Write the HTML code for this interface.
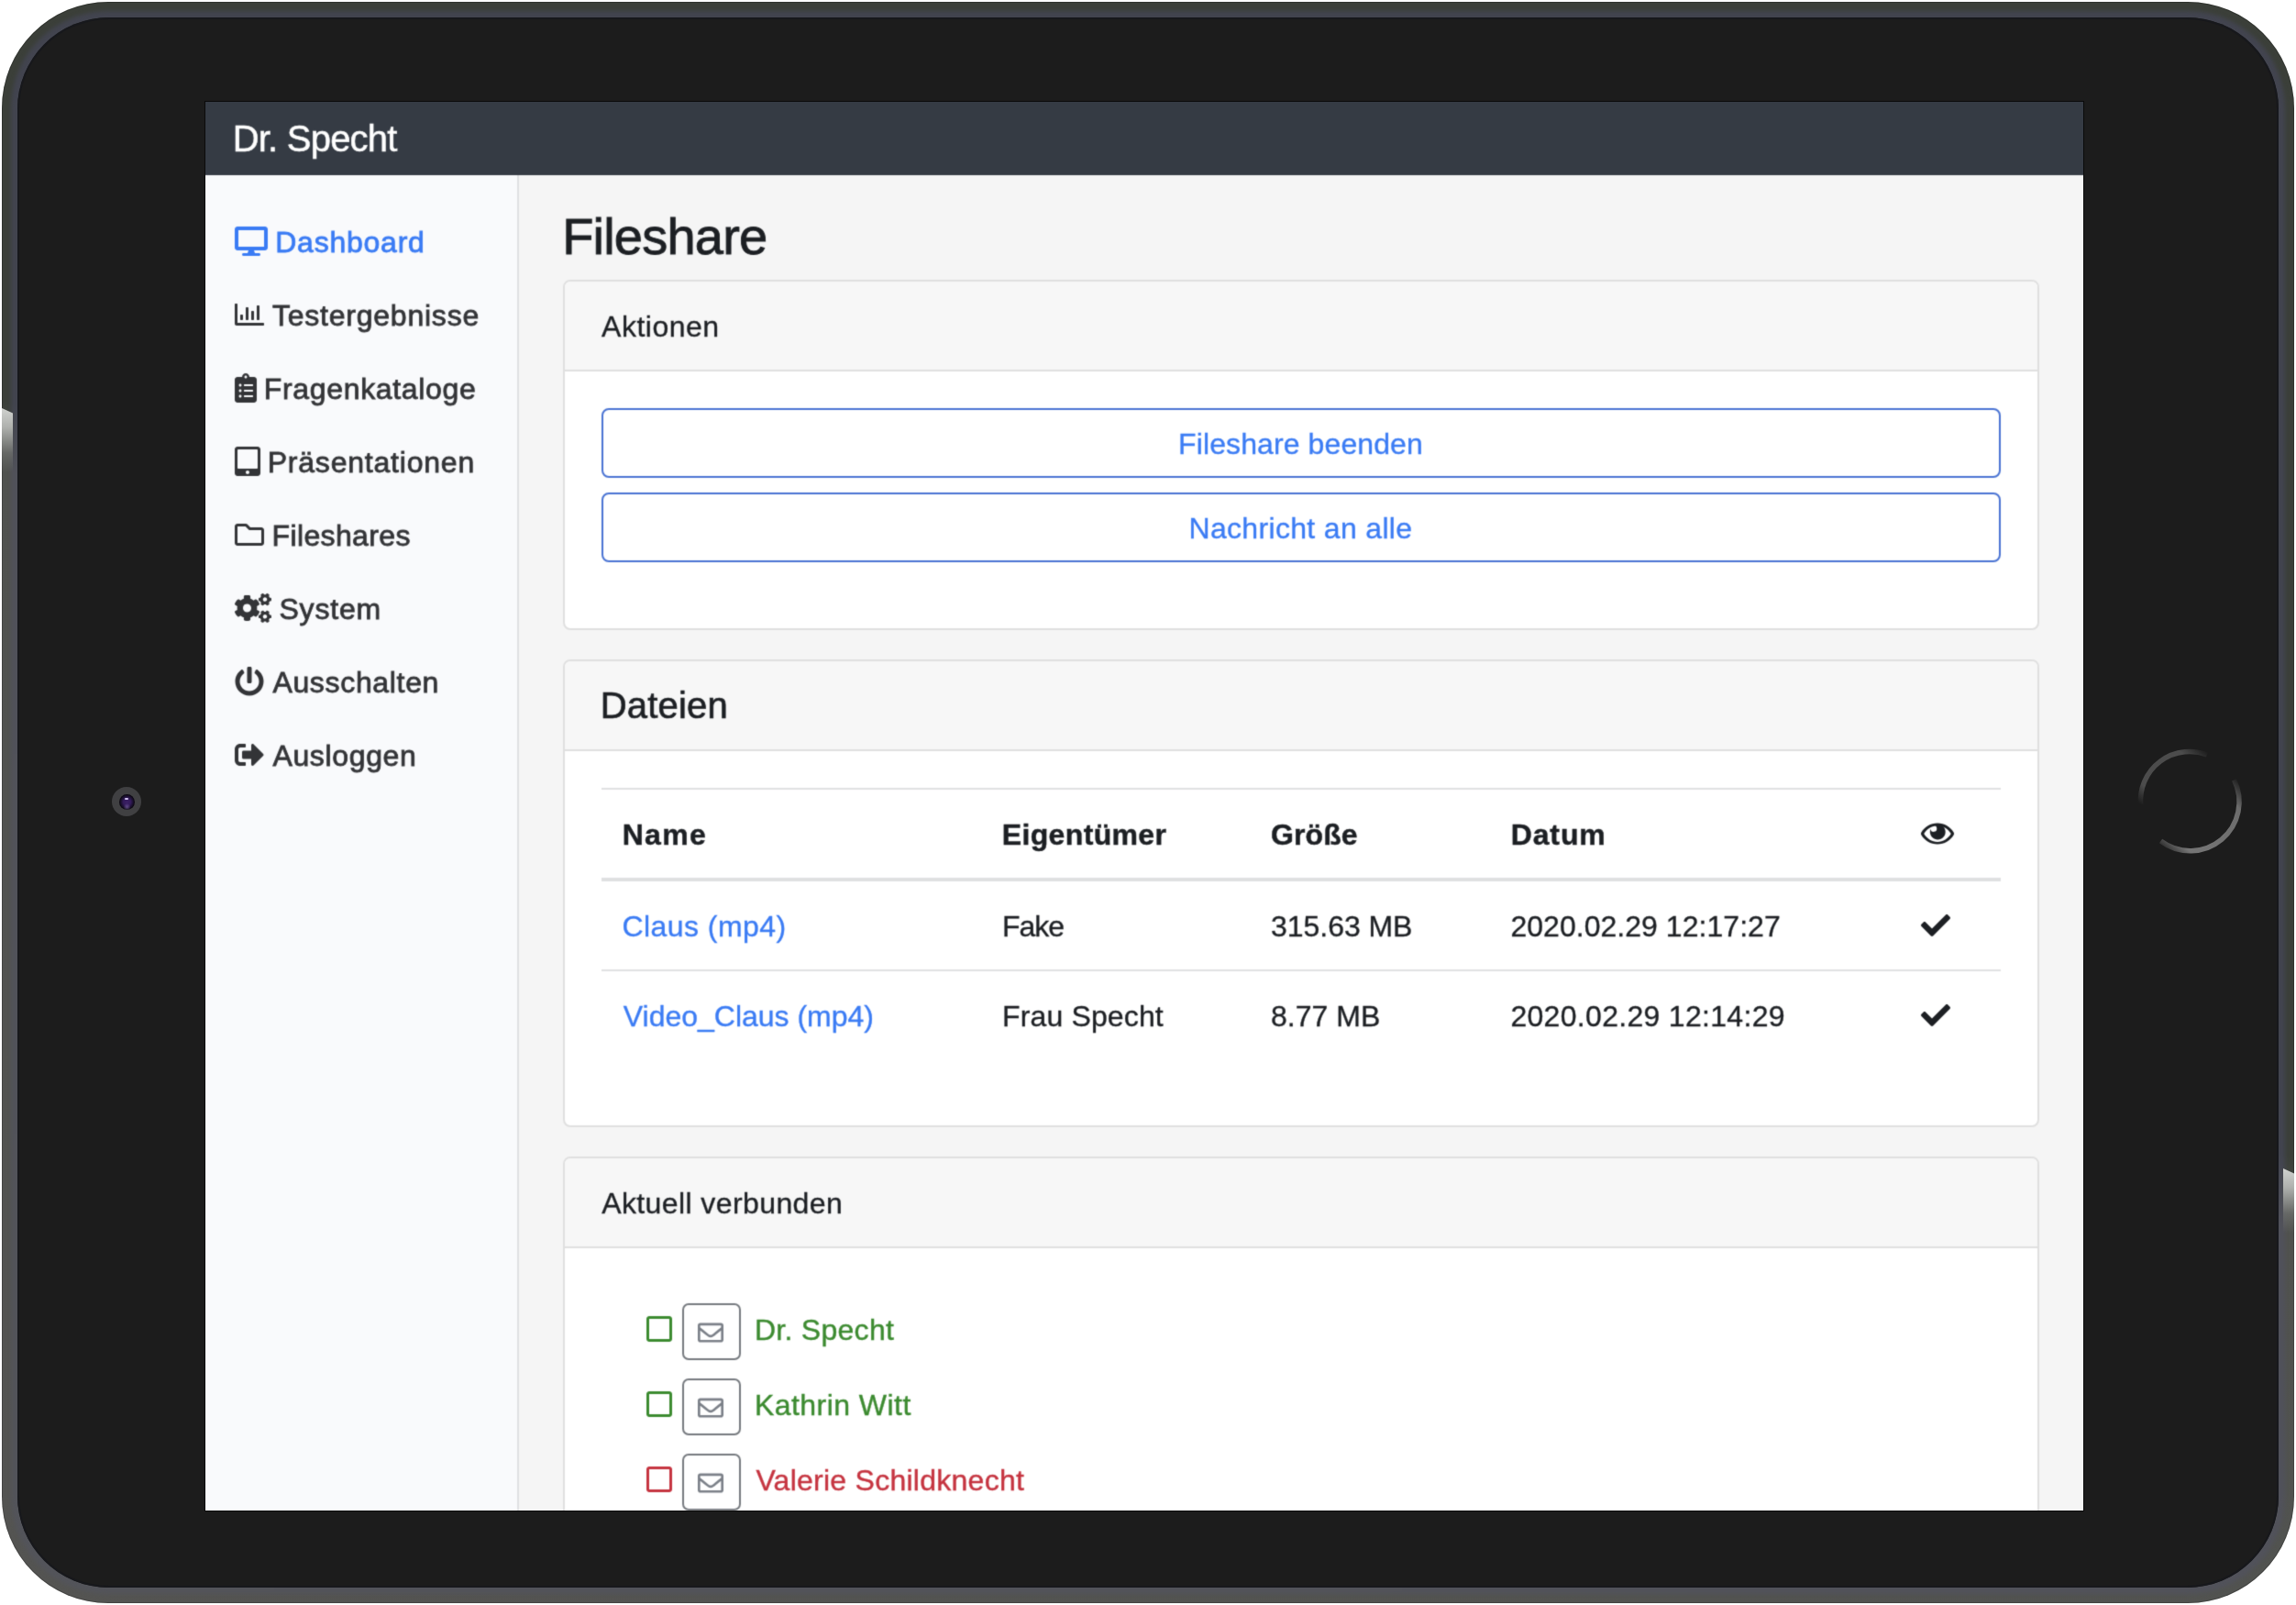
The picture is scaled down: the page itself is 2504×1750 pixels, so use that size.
<!DOCTYPE html>
<html lang="de">
<head>
<meta charset="utf-8">
<title>Fileshare</title>
<style>
*{box-sizing:border-box;margin:0;padding:0}
html,body{width:2504px;height:1750px;background:#fff;overflow:hidden}
body{position:relative;font-family:"Liberation Sans",sans-serif;color:#1c1f23;font-size:32px;line-height:48px;-webkit-text-stroke:.35px currentColor}
/* ---------- device frame ---------- */
#ring{position:absolute;left:2px;top:2px;width:2500px;height:1746px;border-radius:116px;box-shadow:inset 0 0 0 1px rgba(0,0,0,.18);
 background:linear-gradient(198.3deg,#3b3f39 0%,#3b3f39 49%,#50524f 52%,#545452 100%);overflow:hidden}
#ring2{position:absolute;left:12px;top:12px;width:2480px;height:1726px;border-radius:106px;
 background:linear-gradient(198.3deg,#42444f 0%,#42444f 49%,#50515a 52%,#53545a 100%);filter:blur(2px)}
#bezel{position:absolute;left:19px;top:19px;width:2466px;height:1712px;border-radius:100px;background:#1c1c1c;
 box-shadow:inset 0 0 0 2px #17181c}
.hl{position:absolute;width:12px}
#hlL{left:2px;top:445px;height:70px;background:linear-gradient(180deg,#d0d2cf 0%,#aeb0ad 30%,rgba(120,122,119,.6) 70%,rgba(85,86,82,0) 100%);clip-path:polygon(0 0,100% 8%,100% 100%,0 100%)}
#hlR{left:2490px;top:1274px;height:70px;background:linear-gradient(180deg,#d0d2cf 0%,#aeb0ad 30%,rgba(120,122,119,.6) 70%,rgba(85,86,82,0) 100%);clip-path:polygon(0 0,100% 8%,100% 100%,0 100%)}
#cam{position:absolute;left:122px;top:858px;width:32px;height:32px;border-radius:50%;background:#404042}
#cam i{position:absolute;left:7.5px;top:7.5px;width:17px;height:17px;border-radius:50%;
 background:radial-gradient(circle at 50% 82%,rgba(150,125,195,.5) 0%,rgba(150,125,195,0) 24%),radial-gradient(circle at 50% 50%,#3b2065 0%,#331b5a 34%,#1b102f 54%,#070509 72%,#070509 100%)}
#cam b{position:absolute;left:14.2px;top:12.3px;width:3.8px;height:1.5px;border-radius:1px;background:#cdbcec;filter:blur(.4px)}
#home{position:absolute;left:2332px;top:817px;width:112px;height:112px;overflow:visible}
/* ---------- screen ---------- */
#screen{position:absolute;left:224px;top:111px;width:2048px;height:1536px;overflow:hidden;background:#f5f5f5;
 box-shadow:0 0 0 1px #0a0a0a}
#nav{position:absolute;left:0;top:0;width:2048px;height:80px;background:#353b44}
#brand{position:absolute;left:32px;top:10px;font-size:40px;line-height:60px;color:#fff;white-space:nowrap;-webkit-text-stroke:.5px currentColor}
#side{position:absolute;left:0;top:80px;width:342px;height:1464px;background:#f9fafc;
 box-shadow:inset -2px 0 0 rgba(0,0,0,.1)}
.ni{position:absolute;left:32px;height:48px;white-space:nowrap;color:#333437;font-size:32px;line-height:48px;
 -webkit-text-stroke:.8px currentColor}
.ni svg{position:absolute;left:0;top:8px;height:32px;fill:currentColor}
.ni > span{position:absolute;top:0}
.ni.act{color:#3a7bf4}
#main{position:absolute;left:341px;top:79px;width:1707px;height:1456px}
h1{position:absolute;left:49px;top:32px;font-size:56px;line-height:67px;font-weight:400;color:#1c1f23;white-space:nowrap;
 -webkit-text-stroke:.9px currentColor}
.card{position:absolute;left:49.4px;width:1609.6px;background:#fff;border:2px solid #dfdfdf;border-radius:8px}
.ch{height:98px;background:#f7f7f7;border-bottom:2px solid #dfdfdf;border-radius:6px 6px 0 0;padding:24px 40px;white-space:nowrap}
.btn{position:absolute;left:40px;width:1525.6px;height:76px;border:2px solid #4771d2;border-radius:8px;color:#3a7bf4;
 text-align:center;line-height:72px;font-size:32px;background:#fff}

.ch.h5{font-size:40px;-webkit-text-stroke:.7px currentColor}
#tbl{position:absolute;left:40px;top:138px;width:1525.6px;height:298px}
.hr{position:absolute;left:0;width:1525.6px;background:#dfe0e1}
.tc{position:absolute;white-space:nowrap;height:48px;line-height:48px}
.th{font-weight:700;-webkit-text-stroke:.45px currentColor}
a.lk{color:#3a7bf4;text-decoration:none}
.ti{position:absolute;fill:#1c1f23}
.row{position:absolute;left:88.8px;height:62px;width:900px}
.row .sq{position:absolute;left:0;top:11.5px}
.row .mb{position:absolute;left:39px;top:0;width:64px;height:62px;border:2px solid #74787d;border-radius:7px;background:#fff}
.row .mb svg{position:absolute;left:15px;top:15.5px;fill:#7a7f87}
.row .nm{position:absolute;left:119px;top:2px;white-space:nowrap;line-height:48px;-webkit-text-stroke:.4px currentColor}
.g{color:#3b8a2f;fill:#3b8a2f}
.r{color:#c5333f;fill:#c5333f}
.t{position:relative;display:inline-block;white-space:nowrap}
/*CAL*/
#t-brand{letter-spacing:-0.777px;transform:translate(-2.35px,0.00px)}
#t-s1{letter-spacing:0.769px;transform:translate(-1.80px,0.60px)}
#t-s2{letter-spacing:0.772px;transform:translate(-0.07px,0.70px)}
#t-s3{letter-spacing:0.676px;transform:translate(-2.31px,0.70px)}
#t-s4{letter-spacing:0.787px;transform:translate(-2.30px,0.70px)}
#t-s5{letter-spacing:0.363px;transform:translate(-1.47px,0.70px)}
#t-s6{letter-spacing:0.827px;transform:translate(-0.55px,0.70px)}
#t-s7{letter-spacing:0.670px;transform:translate(0.39px,0.70px)}
#t-s8{letter-spacing:0.651px;transform:translate(0.39px,0.70px)}
#t-h1x{letter-spacing:-0.783px;transform:translate(-0.87px,1.90px)}
#t-akt{letter-spacing:0.482px;transform:translate(-0.27px,0.50px)}
#t-b1{letter-spacing:0.100px;transform:translate(-0.70px,0.75px)}
#t-b2{letter-spacing:0.331px;transform:translate(-0.75px,0.60px)}
#t-dat{letter-spacing:0.172px;transform:translate(-1.63px,-0.50px)}
#t-h1{letter-spacing:1.280px;transform:translate(-1.69px,0.75px)}
#t-h2{letter-spacing:0.360px;transform:translate(-1.69px,0.75px)}
#t-h3{letter-spacing:0.109px;transform:translate(-0.45px,0.75px)}
#t-h4{letter-spacing:0.900px;transform:translate(-0.75px,0.75px)}
#t-r1a{letter-spacing:0.449px;transform:translate(-1.94px,0.75px)}
#t-r1b{letter-spacing:-1.054px;transform:translate(-1.33px,0.75px)}
#t-r1c{letter-spacing:-0.046px;transform:translate(-0.32px,0.75px)}
#t-r1d{letter-spacing:0.037px;transform:translate(-0.98px,0.75px)}
#t-r2a{letter-spacing:-0.018px;transform:translate(-0.56px,0.60px)}
#t-r2b{letter-spacing:0.138px;transform:translate(-1.34px,0.60px)}
#t-r2c{letter-spacing:0.034px;transform:translate(-0.43px,0.60px)}
#t-r2d{letter-spacing:0.307px;transform:translate(-0.98px,0.60px)}
#t-akv{letter-spacing:0.404px;transform:translate(-0.25px,1.00px)}
#t-n1{letter-spacing:0.280px;transform:translate(-1.27px,2.75px)}
#t-n2{letter-spacing:0.458px;transform:translate(-1.27px,2.75px)}
#t-n3{letter-spacing:0.258px;transform:translate(0.19px,2.75px)}
/*ENDCAL*/
#inner{position:absolute;left:-4px;top:-4px;width:2056px;height:1544px;background:#f5f5f5;filter:url(#soft)}
#content{position:absolute;left:4px;top:4px;width:2048px;height:1536px}
</style>
</head>
<body>
<div id="ring"></div><div id="ring2"></div><div id="bezel"></div>
<div class="hl" id="hlL"></div><div class="hl" id="hlR"></div>
<div id="cam"><i></i><b></b></div>
<svg id="home" viewBox="0 0 112 112">
 <defs>
  <linearGradient id="hg1" x1="0" y1="1" x2="1" y2="0"><stop offset="0" stop-color="#757575" stop-opacity="0"/><stop offset=".18" stop-color="#757575"/><stop offset=".8" stop-color="#6c6c6c"/><stop offset="1" stop-color="#6c6c6c" stop-opacity="0"/></linearGradient>
  <linearGradient id="hg2" x1="0" y1="1" x2="1" y2="0"><stop offset="0" stop-color="#4c4c4c" stop-opacity="0"/><stop offset=".2" stop-color="#4c4c4c"/><stop offset=".8" stop-color="#4c4c4c"/><stop offset="1" stop-color="#4c4c4c" stop-opacity="0"/></linearGradient>
 </defs>
 <path d="M 104.5 33.4 A 53.5 53.5 0 0 1 24.5 100" fill="none" stroke="url(#hg1)" stroke-width="5.5"/>
 <path d="M 2.6 60 A 53.5 53.5 0 0 1 75 6" fill="none" stroke="url(#hg2)" stroke-width="5.5"/>
</svg>

<svg width="0" height="0" style="position:absolute">
 <defs>
  <filter id="soft" x="0" y="0" width="100%" height="100%" color-interpolation-filters="sRGB"><feConvolveMatrix order="3" kernelMatrix="0.025 0.1 0.025 0.1 0.5 0.1 0.025 0.1 0.025" edgeMode="duplicate" preserveAlpha="true"/></filter>
  <symbol id="i-desktop" viewBox="0 0 576 512"><path d="M528 0H48C21.5 0 0 21.5 0 48v320c0 26.500 21.500 48 48 48h192l-16 48h-72c-13.300 0-24 10.700-24 24s10.700 24 24 24h272c13.300 0 24-10.700 24-24s-10.700-24-24-24h-72l-16-48h192c26.500 0 48-21.500 48-48V48c0-26.500-21.500-48-48-48zm-16 352H64V64h448v288z"/></symbol>
  <symbol id="i-chart" viewBox="0 0 512 512"><path d="M396.800 352h22.400c6.400 0 12.800-6.400 12.800-12.800V108.800c0-6.400-6.400-12.800-12.800-12.800h-22.400c-6.400 0-12.800 6.400-12.800 12.800v230.400c0 6.400 6.400 12.800 12.800 12.800zm-192 0h22.400c6.400 0 12.800-6.400 12.800-12.800V140.800c0-6.400-6.400-12.800-12.800-12.800h-22.400c-6.400 0-12.800 6.400-12.800 12.800v198.400c0 6.400 6.400 12.800 12.800 12.800zm96 0h22.400c6.400 0 12.800-6.400 12.800-12.800V204.800c0-6.400-6.400-12.800-12.800-12.800h-22.400c-6.400 0-12.800 6.400-12.800 12.800v134.400c0 6.400 6.400 12.800 12.800 12.800zM496 400H48V80c0-8.840-7.160-16-16-16H16C7.160 64 0 71.160 0 80v336c0 17.670 14.330 32 32 32h464c8.840 0 16-7.160 16-16v-16c0-8.840-7.160-16-16-16zm-387.200-48h22.400c6.400 0 12.800-6.400 12.800-12.800v-70.400c0-6.400-6.400-12.800-12.800-12.800h-22.400c-6.400 0-12.800 6.400-12.800 12.800v70.400c0 6.400 6.400 12.800 12.800 12.800z"/></symbol>
  <symbol id="i-clip" viewBox="0 0 384 512"><path d="M336 64h-80c0-35.300-28.700-64-64-64s-64 28.700-64 64H48C21.500 64 0 85.500 0 112v352c0 26.500 21.500 48 48 48h288c26.500 0 48-21.500 48-48V112c0-26.500-21.500-48-48-48zM96 424c-13.300 0-24-10.700-24-24s10.700-24 24-24 24 10.700 24 24-10.700 24-24 24zm0-96c-13.300 0-24-10.700-24-24s10.700-24 24-24 24 10.700 24 24-10.700 24-24 24zm0-96c-13.300 0-24-10.700-24-24s10.700-24 24-24 24 10.700 24 24-10.700 24-24 24zm96-192c13.300 0 24 10.700 24 24s-10.700 24-24 24-24-10.700-24-24 10.700-24 24-24zm128 368c0 4.400-3.600 8-8 8H168c-4.400 0-8-3.600-8-8v-16c0-4.400 3.600-8 8-8h144c4.400 0 8 3.600 8 8v16zm0-96c0 4.400-3.600 8-8 8H168c-4.400 0-8-3.600-8-8v-16c0-4.400 3.600-8 8-8h144c4.400 0 8 3.600 8 8v16zm0-96c0 4.400-3.600 8-8 8H168c-4.400 0-8-3.600-8-8v-16c0-4.400 3.600-8 8-8h144c4.400 0 8 3.600 8 8v16z"/></symbol>
  <symbol id="i-tablet" viewBox="0 0 448 512"><path d="M400 0H48C21.500 0 0 21.500 0 48v416c0 26.500 21.500 48 48 48h352c26.500 0 48-21.500 48-48V48c0-26.500-21.500-48-48-48zM224 480c-17.700 0-32-14.300-32-32s14.300-32 32-32 32 14.300 32 32-14.300 32-32 32zm176-108c0 6.600-5.400 12-12 12H60c-6.600 0-12-5.400-12-12V60c0-6.600 5.400-12 12-12h328c6.600 0 12 5.400 12 12v312z"/></symbol>
  <symbol id="i-folder" viewBox="0 0 512 512"><path d="M464 128H272l-54.630-54.630c-6-6-14.140-9.370-22.630-9.370H48C21.490 64 0 85.490 0 112v288c0 26.510 21.490 48 48 48h416c26.510 0 48-21.490 48-48V176c0-26.510-21.490-48-48-48zm0 272H48V112h140.120l54.630 54.630c6 6 14.140 9.370 22.630 9.370H464v224z"/></symbol>
  <symbol id="i-cogs" viewBox="0 0 640 512"><path d="M512.1 191l-8.2 14.3c-3 5.3-9.400 7.500-15.100 5.400-11.800-4.400-22.600-10.700-32.100-18.600-4.600-3.800-5.800-10.500-2.800-15.700l8.200-14.300c-6.900-8-12.300-17.300-15.900-27.400h-16.500c-6 0-11.200-4.300-12.200-10.300-2-12-2.100-24.600 0-37.100 1-6 6.200-10.400 12.200-10.400h16.500c3.600-10.100 9-19.400 15.900-27.400l-8.200-14.300c-3-5.200-1.900-11.900 2.800-15.700 9.500-7.900 20.400-14.200 32.100-18.600 5.700-2.100 12.100.1 15.100 5.400l8.200 14.300c10.500-1.900 21.200-1.900 31.700 0L552 6.300c3-5.300 9.400-7.500 15.100-5.400 11.800 4.400 22.600 10.700 32.100 18.600 4.600 3.800 5.800 10.500 2.800 15.700l-8.200 14.300c6.900 8 12.300 17.300 15.900 27.400h16.500c6 0 11.200 4.300 12.200 10.300 2 12 2.100 24.600 0 37.100-1 6-6.200 10.400-12.200 10.400h-16.500c-3.600 10.100-9 19.400-15.900 27.400l8.200 14.300c3 5.200 1.900 11.900-2.800 15.700-9.500 7.900-20.400 14.200-32.100 18.600-5.700 2.100-12.100-.1-15.100-5.400l-8.200-14.300c-10.400 1.900-21.200 1.900-31.700 0zm-10.500-58.800c38.500 29.600 82.400-14.300 52.800-52.800-38.500-29.700-82.400 14.300-52.800 52.800zM386.300 286.100l33.700 16.800c10.100 5.800 14.500 18.100 10.500 29.100-8.900 24.200-26.400 46.400-42.600 65.800-7.400 8.900-20.200 11.100-30.300 5.300l-29.100-16.800c-16 13.700-34.600 24.600-54.900 31.700v33.600c0 11.600-8.300 21.600-19.700 23.600-24.600 4.200-50.400 4.400-75.900 0-11.500-2-20-11.900-20-23.600V418c-20.300-7.200-38.900-18-54.900-31.700L74 403c-10 5.800-22.900 3.600-30.300-5.300-16.200-19.400-33.300-41.600-42.200-65.700-4-10.900.4-23.200 10.500-29.100l33.300-16.800c-3.900-20.900-3.900-42.400 0-63.400L12 205.800c-10.100-5.800-14.600-18.100-10.500-29 8.900-24.200 26-46.400 42.200-65.800 7.400-8.900 20.200-11.100 30.300-5.300l29.100 16.800c16-13.700 34.600-24.600 54.900-31.700V57.100c0-11.500 8.200-21.500 19.600-23.500 24.600-4.200 50.500-4.400 76-.1 11.500 2 20 11.900 20 23.600v33.600c20.300 7.200 38.900 18 54.900 31.700l29.100-16.800c10-5.800 22.900-3.600 30.300 5.300 16.200 19.400 33.200 41.600 42.100 65.800 4 10.900.1 23.200-10 29.100l-33.700 16.800c3.900 21 3.900 42.500 0 63.500zm-117.600 21.100c59.200-77-28.700-164.900-105.700-105.700-59.200 77 28.700 164.900 105.700 105.700zm243.400 182.700l-8.200 14.300c-3 5.300-9.400 7.500-15.100 5.400-11.800-4.400-22.600-10.700-32.100-18.600-4.600-3.800-5.800-10.500-2.800-15.700l8.200-14.300c-6.900-8-12.300-17.300-15.900-27.400h-16.500c-6 0-11.200-4.300-12.200-10.300-2-12-2.100-24.600 0-37.100 1-6 6.200-10.400 12.200-10.400h16.500c3.600-10.100 9-19.400 15.900-27.400l-8.200-14.300c-3-5.200-1.900-11.900 2.800-15.700 9.500-7.900 20.400-14.200 32.100-18.600 5.700-2.100 12.100.1 15.100 5.400l8.200 14.300c10.500-1.900 21.200-1.900 31.700 0l8.200-14.300c3-5.300 9.400-7.500 15.100-5.400 11.800 4.400 22.600 10.700 32.100 18.600 4.600 3.800 5.800 10.500 2.800 15.700l-8.200 14.300c6.900 8 12.300 17.300 15.900 27.400h16.500c6 0 11.200 4.300 12.200 10.300 2 12 2.100 24.600 0 37.100-1 6-6.200 10.400-12.200 10.400h-16.500c-3.600 10.100-9 19.400-15.900 27.400l8.200 14.300c3 5.200 1.900 11.900-2.800 15.700-9.500 7.900-20.400 14.200-32.100 18.600-5.700 2.100-12.100-.1-15.100-5.400l-8.200-14.300c-10.400 1.900-21.200 1.900-31.700 0zM501.600 431c38.500 29.600 82.400-14.300 52.800-52.800-38.500-29.600-82.400 14.300-52.800 52.800z"/></symbol>
  <symbol id="i-power" viewBox="0 0 512 512"><path d="M400 54.100c63 45 104 118.600 104 201.900 0 136.800-110.800 247.700-247.500 248C120 504.300 8.200 393 8 256.400 7.900 173.100 48.900 99.300 111.800 54.200c11.700-8.300 28-4.800 35 7.700L162.600 90c5.900 10.500 3.100 23.800-6.600 31-41.500 30.800-68 79.600-68 134.900-.1 92.300 74.500 168.100 168 168.100 91.600 0 168.600-74.200 168-169.100-.3-51.800-24.700-101.800-68.100-134-9.700-7.200-12.400-20.500-6.500-30.900l15.800-28.100c7-12.400 23.200-16.100 34.800-7.800zM296 264V24c0-13.300-10.700-24-24-24h-32c-13.300 0-24 10.700-24 24v240c0 13.300 10.700 24 24 24h32c13.300 0 24-10.700 24-24z"/></symbol>
  <symbol id="i-signout" viewBox="0 0 512 512"><path d="M497 273L329 441c-15 15-41 4.500-41-17v-96H152c-13.300 0-24-10.700-24-24v-96c0-13.300 10.700-24 24-24h136V88c0-21.400 25.900-32 41-17l168 168c9.300 9.400 9.300 24.600 0 34zM192 436v-40c0-6.600-5.400-12-12-12H96c-17.700 0-32-14.300-32-32V160c0-17.700 14.300-32 32-32h84c6.600 0 12-5.400 12-12V76c0-6.600-5.400-12-12-12H96c-53 0-96 43-96 96v192c0 53 43 96 96 96h84c6.600 0 12-5.400 12-12z"/></symbol>
  <symbol id="i-eye" viewBox="0 0 576 512"><path fill-rule="evenodd" d="M569.354 231.631C512.970 135.949 407.810 72 288 72 168.140 72 63.004 135.994 6.646 231.630a47.999 47.999 0 0 0 0 48.739C63.031 376.051 168.190 440 288 440c119.860 0 224.996-63.994 281.354-159.631a48.002 48.002 0 0 0 0-48.738zM524 256C476 340 388 398 288 398S100 340 52 256C100 172 188 114 288 114s188 58 236 142z"/><path d="M212.6 114.8A135 135 0 1 1 168.1 170.5A54 54 0 1 0 212.6 114.8z"/></symbol>
  <symbol id="i-check" viewBox="0 0 512 512"><path d="M173.898 439.404l-166.400-166.400c-9.997-9.997-9.997-26.206 0-36.204l36.203-36.204c9.997-9.998 26.207-9.998 36.204 0L192 312.690 432.095 72.596c9.997-9.997 26.207-9.997 36.204 0l36.203 36.204c9.997 9.997 9.997 26.206 0 36.204l-294.400 294.401c-9.998 9.997-26.207 9.997-36.204-.001z"/></symbol>
  <symbol id="i-square" viewBox="0 0 448 512"><path d="M400 32H48C21.500 32 0 53.500 0 80v352c0 26.500 21.500 48 48 48h352c26.500 0 48-21.500 48-48V80c0-26.500-21.500-48-48-48zm-6 400H54c-3.300 0-6-2.700-6-6V86c0-3.300 2.700-6 6-6h340c3.300 0 6 2.700 6 6v340c0 3.300-2.700 6-6 6z"/></symbol>
  <symbol id="i-env" viewBox="0 0 512 512"><path d="M464 64H48C21.490 64 0 85.490 0 112v288c0 26.510 21.490 48 48 48h416c26.510 0 48-21.490 48-48V112c0-26.510-21.490-48-48-48zm0 48v40.805c-22.422 18.259-58.168 46.651-134.587 106.490-16.841 13.247-50.201 45.072-73.413 44.701-23.208.375-56.579-31.459-73.413-44.701C106.180 199.465 70.425 171.067 48 152.805V112h416zM48 400V214.398c22.914 18.251 55.409 43.862 104.938 82.646 21.857 17.205 60.134 55.186 103.062 54.955 42.717.231 80.509-37.199 103.053-54.947 49.528-38.783 82.032-64.401 104.947-82.653V400H48z"/></symbol>
 </defs>
</svg>
<div id="screen"><div id="inner"><div id="content">
 <div id="main">
  <h1><span class="t" id="t-h1x">Fileshare</span></h1>
  <div class="card" style="top:115px;height:382px">
   <div class="ch"><span class="t" id="t-akt">Aktionen</span></div>
   <div class="btn" style="top:138px"><span class="t" id="t-b1">Fileshare beenden</span></div>
   <div class="btn" style="top:230px"><span class="t" id="t-b2">Nachricht an alle</span></div>
  </div>
  <div class="card" style="top:529px;height:510px">
   <div class="ch h5"><span class="t" id="t-dat">Dateien</span></div>
   <div id="tbl">
    <div class="hr" style="top:0;height:2px"></div>
    <div class="hr" style="top:98px;height:4px"></div>
    <div class="hr" style="top:198px;height:2px"></div>
    <div class="tc th" style="left:24px;top:26px"><span class="t" id="t-h1">Name</span></div>
    <div class="tc th" style="left:438px;top:26px"><span class="t" id="t-h2">Eigentümer</span></div>
    <div class="tc th" style="left:730px;top:26px"><span class="t" id="t-h3">Größe</span></div>
    <div class="tc th" style="left:992px;top:26px"><span class="t" id="t-h4">Datum</span></div>
    <svg class="ti" style="left:1438.5px;top:34px" width="36" height="32"><use href="#i-eye"/></svg>
    <div class="tc" style="left:24px;top:126px"><span class="t" id="t-r1a"><a class="lk">Claus (mp4)</a></span></div>
    <div class="tc" style="left:438px;top:126px"><span class="t" id="t-r1b">Fake</span></div>
    <div class="tc" style="left:730px;top:126px"><span class="t" id="t-r1c">315.63 MB</span></div>
    <div class="tc" style="left:992px;top:126px"><span class="t" id="t-r1d">2020.02.29 12:17:27</span></div>
    <svg class="ti" style="left:1438.5px;top:134.4px" width="32" height="32"><use href="#i-check"/></svg>
    <div class="tc" style="left:24px;top:224px"><span class="t" id="t-r2a"><a class="lk">Video_Claus (mp4)</a></span></div>
    <div class="tc" style="left:438px;top:224px"><span class="t" id="t-r2b">Frau Specht</span></div>
    <div class="tc" style="left:730px;top:224px"><span class="t" id="t-r2c">8.77 MB</span></div>
    <div class="tc" style="left:992px;top:224px"><span class="t" id="t-r2d">2020.02.29 12:14:29</span></div>
    <svg class="ti" style="left:1438.5px;top:232.4px" width="32" height="32"><use href="#i-check"/></svg>
   </div>
  </div>
  <div class="card" style="top:1071px;height:500px">
   <div class="ch"><span class="t" id="t-akv">Aktuell verbunden</span></div>
   <div class="row g" style="top:158px"><svg class="sq" width="28" height="32"><use href="#i-square"/></svg><div class="mb"><svg width="28" height="28"><use href="#i-env"/></svg></div><div class="nm"><span class="t" id="t-n1">Dr. Specht</span></div></div>
   <div class="row g" style="top:240px"><svg class="sq" width="28" height="32"><use href="#i-square"/></svg><div class="mb"><svg width="28" height="28"><use href="#i-env"/></svg></div><div class="nm"><span class="t" id="t-n2">Kathrin Witt</span></div></div>
   <div class="row r" style="top:322px"><svg class="sq" width="28" height="32"><use href="#i-square"/></svg><div class="mb"><svg width="28" height="28"><use href="#i-env"/></svg></div><div class="nm"><span class="t" id="t-n3">Valerie Schildknecht</span></div></div>
  </div>
 </div>
 <div id="side">
  <div class="ni act" style="top:48px"><svg width="36" height="32"><use href="#i-desktop"/></svg><span class="t" id="t-s1" style="left:46px">Dashboard</span></div>
  <div class="ni " style="top:128px"><svg width="32" height="32"><use href="#i-chart"/></svg><span class="t" id="t-s2" style="left:41px">Testergebnisse</span></div>
  <div class="ni " style="top:208px"><svg width="24" height="32"><use href="#i-clip"/></svg><span class="t" id="t-s3" style="left:34px">Fragenkataloge</span></div>
  <div class="ni " style="top:288px"><svg width="28" height="32"><use href="#i-tablet"/></svg><span class="t" id="t-s4" style="left:38px">Präsentationen</span></div>
  <div class="ni " style="top:368px"><svg width="32" height="32"><use href="#i-folder"/></svg><span class="t" id="t-s5" style="left:42px">Fileshares</span></div>
  <div class="ni " style="top:448px"><svg width="40" height="32"><use href="#i-cogs"/></svg><span class="t" id="t-s6" style="left:49px">System</span></div>
  <div class="ni " style="top:528px"><svg width="32" height="32"><use href="#i-power"/></svg><span class="t" id="t-s7" style="left:41px">Ausschalten</span></div>
  <div class="ni " style="top:608px"><svg width="32" height="32"><use href="#i-signout"/></svg><span class="t" id="t-s8" style="left:41px">Ausloggen</span></div>
 </div>
 <div style="position:absolute;left:-4px;top:80px;width:4px;height:1464px;background:#f9fafc"></div>
 <div style="position:absolute;left:-4px;top:-4px;width:2056px;height:84px;background:#353b44"></div>
 <div id="nav"><div id="brand"><span class="t" id="t-brand">Dr. Specht</span></div></div>
</div></div></div>
</body>
</html>
